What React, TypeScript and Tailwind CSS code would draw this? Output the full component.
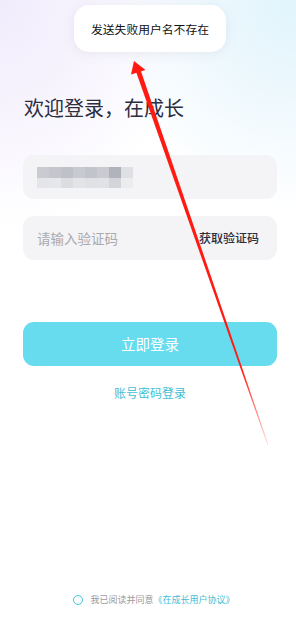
import React from "react";

const topRow = ["#c9cbd1", "#c4c6cc", "#bfc1c8", "#c8cad0", "#c2c4cb", "#cacbd1", "#b0b3bc", "#dfe0e4"];
const botRow = ["#e4e5e8", "#e6e7ea", "#dcdde1", "#e3e4e7", "#e0e1e5", "#e1e2e5", "#d4d5d9", "#ebecee"];

export default function App() {
  return (
    <div
      className="relative w-[296px] h-[641px] overflow-hidden flex flex-col bg-white bg-[radial-gradient(ellipse_190px_230px_at_0%_0%,#f1ecfc_0%,#f5f1fd_35%,rgba(255,255,255,0)_100%),radial-gradient(ellipse_200px_210px_at_100%_0%,#e1f4fc_0%,#eaf7fd_35%,rgba(255,255,255,0)_100%)]"
      style={{ fontFamily: '"Noto Sans CJK SC", "Noto Sans", sans-serif' }}
    >
      <div className="pl-[23px] pr-[19px] pt-[94px] flex flex-col">
        <h1 className="pl-[1px] text-[20px] leading-[28px] text-[#2b2e3f] font-normal">欢迎登录，在成长</h1>

        <div className="mt-[33px] h-[44px] rounded-[11px] bg-[#f4f4f6] flex items-center pl-[14px]">
          <div className="flex flex-col">
            <div className="flex">
              {topRow.map((c, i) => (
                <div key={i} className="w-[12px] h-[11px]" style={{ backgroundColor: c }} />
              ))}
            </div>
            <div className="flex">
              {botRow.map((c, i) => (
                <div key={i} className="w-[12px] h-[10px]" style={{ backgroundColor: c }} />
              ))}
            </div>
          </div>
        </div>

        <div className="mt-[17px] h-[44px] rounded-[11px] bg-[#f4f4f6] flex items-center justify-between pl-[14px] pr-[18px]">
          <span className="text-[13.5px] text-[#a9aab0]">请输入验证码</span>
          <span className="text-[12px] font-medium text-[#2b2e3f]">获取验证码</span>
        </div>

        <button className="mt-[62px] h-[44px] rounded-[11px] bg-[#67dcee] text-white text-[14.5px] flex items-center justify-center">
          立即登录
        </button>

        <div className="mt-[18px] text-center text-[12px] leading-[18px] text-[#3fc0d4]">账号密码登录</div>
      </div>

      <div className="mt-auto pb-[33px] flex items-center justify-center gap-[7px] pl-[12px]">
        <span className="w-[10px] h-[10px] rounded-full border-[1.5px] border-[#3fc8db]" />
        <span className="text-[9px] leading-[16px] text-[#9a9ba0]">
          我已阅读并同意<span className="text-[#3fc0d4]">《在成长用户协议》</span>
        </span>
      </div>

      <div className="absolute left-[74px] top-[5px] w-[152px] h-[47px] rounded-[15px] bg-white shadow-[0_2px_12px_rgba(120,120,150,0.12)] flex items-center justify-center">
        <span className="text-[11.8px] text-[#111111]">发送失败用户名不存在</span>
      </div>

      <svg className="absolute left-0 top-0 pointer-events-none" width="296" height="641" viewBox="0 0 296 641">
        <defs>
          <linearGradient id="fade" x1="136" y1="65" x2="268" y2="445" gradientUnits="userSpaceOnUse">
            <stop offset="0" stopColor="#ff1a12" stopOpacity="1" />
            <stop offset="0.8" stopColor="#ff1a12" stopOpacity="1" />
            <stop offset="1" stopColor="#ff1a12" stopOpacity="0.15" />
          </linearGradient>
        </defs>
        <polygon points="140.3,69.2 135.7,70.8 267.6,445.2 268.4,444.8" fill="url(#fade)" />
        <polygon points="134,61 131,74.5 145.5,70" fill="#ff1a12" />
      </svg>
    </div>
  );
}
